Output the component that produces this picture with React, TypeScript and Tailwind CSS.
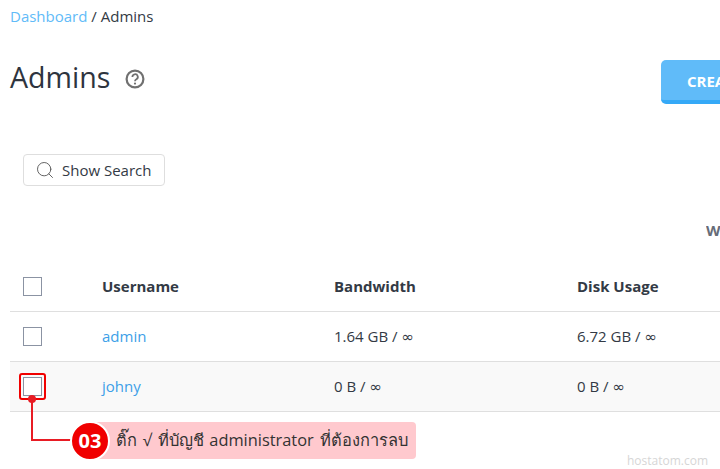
import { Search } from "lucide-react";

const rows = [
  { name: "admin", bandwidth: "1.64 GB / ", disk: "6.72 GB / ", shaded: false },
  { name: "johny", bandwidth: "0 B / ", disk: "0 B / ", shaded: true },
];

const Checkbox = () => (
  <div className="w-[19px] h-[19px] border border-[#8b93a3] bg-white"></div>
);

const Infinity = () => <span className="font-['DejaVu_Sans'] text-[15px] leading-none">∞</span>;

export default function App() {
  return (
    <div className="relative w-[720px] h-[469px] overflow-hidden bg-white text-[#333a45] font-['Open_Sans',sans-serif]">
      <div className="pl-[10px] pt-[6px] text-[15px] leading-[20px]">
        <span className="text-[#61bbf8]">Dashboard</span> / Admins
      </div>

      <div className="flex justify-between items-start pl-[10px] pt-[34px]">
        <div className="flex items-center h-[36px] -mt-[1px]">
          <h1 className="text-[28.6px] font-medium leading-[36px] text-[#2e343e]">Admins</h1>
          <svg className="ml-[15px] mt-[4px]" width="20" height="20" viewBox="0 0 20 20" fill="none" stroke="#707070" strokeWidth="2.2">
            <circle cx="10" cy="10" r="8.4" />
            <path d="M7.4 8a2.7 2.7 0 1 1 4 2.3c-.9.5-1.4 1-1.4 2" strokeWidth="1.8" />
            <circle cx="10" cy="14.6" r="1.1" fill="#707070" stroke="none" />
          </svg>
        </div>
        <div className="w-[100px] -mr-[41px] h-[44px] bg-[#60bbf9] border-b-[4px] border-[#35a9f7] rounded-[5px] pl-[26px] text-white font-bold text-[15px] leading-[42px]">
          CREATE
        </div>
      </div>

      <div className="pl-[23px] pt-[50px]">
        <div className="w-[142px] h-[32px] flex items-center border border-[#dedede] rounded-[4px] pl-[11px] text-[15px]">
          <Search size={20} strokeWidth={1.1} className="text-[#555] mr-[7px]" />
          Show Search
        </div>
      </div>

      <div className="flex justify-end h-[76px] pt-[34px] text-[15px] font-bold text-[#666c78] leading-[20px]">
        <span className="w-[14px] overflow-hidden">W</span>
      </div>

      <div className="ml-[10px] text-[15px]">
        <div className="flex items-center h-[50px] border-b border-[#dfdfdf] font-bold">
          <div className="w-[92px] pl-[13px]"><Checkbox /></div>
          <div className="w-[232px]">Username</div>
          <div className="w-[243px]">Bandwidth</div>
          <div>Disk Usage</div>
        </div>
        {rows.map((r) => (
          <div key={r.name} className={`flex items-center h-[50px] border-b border-[#dfdfdf] ${r.shaded ? "bg-[#f9f9f9]" : ""}`}>
            <div className="w-[92px] pl-[13px]"><Checkbox /></div>
            <div className="w-[232px] text-[#3d9fe8]">{r.name}</div>
            <div className="w-[243px]">{r.bandwidth}<Infinity /></div>
            <div>{r.disk}<Infinity /></div>
          </div>
        ))}
      </div>

      {/* annotation */}
      <div className="absolute left-[19px] top-[373px] w-[27px] h-[27px] border-2 border-[#f00000] rounded-[3px]"></div>
      <div className="absolute left-[28px] top-[395px] w-[8px] h-[8px] rounded-full bg-[#e81c24]"></div>
      <div className="absolute left-[31px] top-[400px] w-[44px] h-[41px] border-l-2 border-b-2 border-[#e81c24]"></div>
      <div className="absolute left-[90px] top-[422px] w-[326px] h-[37px] bg-[#ffc9ce] rounded-[4px] pl-[26px] text-[16.4px] [word-spacing:1.5px] leading-[36px] text-[#333] font-['Open_Sans','Noto_Sans',sans-serif] whitespace-nowrap">
        ติ๊ก √ ที่บัญชี administrator ที่ต้องการลบ
      </div>
      <div className="absolute left-[70px] top-[421px] w-[40px] h-[40px] rounded-full bg-[#f00000] border-2 border-white text-white font-bold text-[20px] leading-[36px] text-center">
        03
      </div>

      <div className="absolute right-[12px] top-[454px] text-[12px] leading-[14px] text-[#d6d6d6]">
        hostatom.com
      </div>
    </div>
  );
}
